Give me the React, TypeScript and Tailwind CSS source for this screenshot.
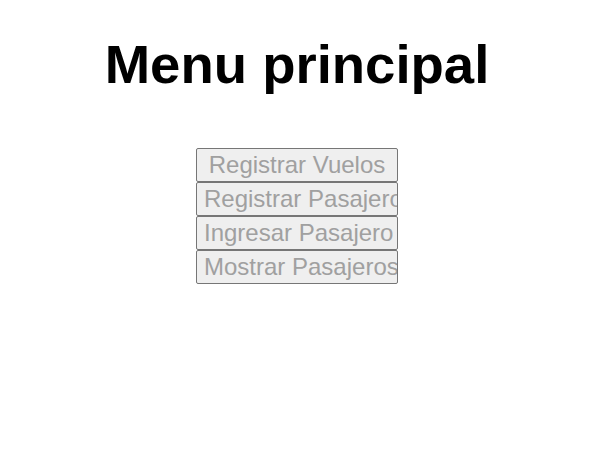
const items = ['Registrar Vuelos', 'Registrar Pasajero', 'Ingresar Pasajero', 'Mostrar Pasajeros'];

export default function App() {
  return (
    <div className="w-[594px] min-h-[476px] bg-white flex flex-col items-center pt-[34px] font-['Liberation_Sans',Arial,sans-serif]">
      <h1 className="text-[54.5px] leading-[62px] font-bold text-black">Menu principal</h1>
      <div className="mt-[52px] flex flex-col">
        {items.map((label) => (
          <button
            key={label}
            className="w-[202px] h-[34px] border border-[#767676] rounded-[2px] bg-[#efefef] text-[#a0a0a0] text-[24px] leading-[28px] px-[7px] overflow-hidden whitespace-nowrap flex items-center justify-center-safe"
          >
            <span className="block">{label}</span>
          </button>
        ))}
      </div>
    </div>
  );
}
